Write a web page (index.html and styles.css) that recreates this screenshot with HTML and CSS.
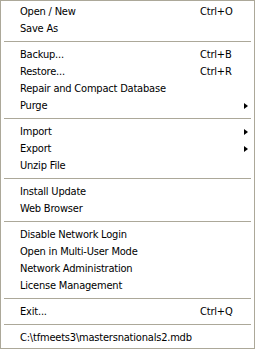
FILE: index.html
```html
<!DOCTYPE html>
<html>
<head>
<meta charset="utf-8">
<link rel="stylesheet" href="styles.css">
</head>
<body>
<div class="menu">
  <div class="item"><span class="label">Open / New</span><span class="key">Ctrl+O</span><span class="sub"></span></div>
  <div class="item"><span class="label">Save As</span><span class="key"></span><span class="sub"></span></div>
  <div class="sep"></div>
  <div class="item"><span class="label">Backup...</span><span class="key">Ctrl+B</span><span class="sub"></span></div>
  <div class="item"><span class="label">Restore...</span><span class="key">Ctrl+R</span><span class="sub"></span></div>
  <div class="item"><span class="label">Repair and Compact Database</span><span class="key"></span><span class="sub"></span></div>
  <div class="item"><span class="label">Purge</span><span class="key"></span><span class="sub"><span class="arrow"></span></span></div>
  <div class="sep"></div>
  <div class="item"><span class="label">Import</span><span class="key"></span><span class="sub"><span class="arrow"></span></span></div>
  <div class="item"><span class="label">Export</span><span class="key"></span><span class="sub"><span class="arrow"></span></span></div>
  <div class="item"><span class="label">Unzip File</span><span class="key"></span><span class="sub"></span></div>
  <div class="sep"></div>
  <div class="item"><span class="label">Install Update</span><span class="key"></span><span class="sub"></span></div>
  <div class="item"><span class="label">Web Browser</span><span class="key"></span><span class="sub"></span></div>
  <div class="sep"></div>
  <div class="item"><span class="label">Disable Network Login</span><span class="key"></span><span class="sub"></span></div>
  <div class="item"><span class="label">Open in Multi-User Mode</span><span class="key"></span><span class="sub"></span></div>
  <div class="item"><span class="label">Network Administration</span><span class="key"></span><span class="sub"></span></div>
  <div class="item"><span class="label">License Management</span><span class="key"></span><span class="sub"></span></div>
  <div class="sep"></div>
  <div class="item"><span class="label">Exit...</span><span class="key">Ctrl+Q</span><span class="sub"></span></div>
  <div class="sep"></div>
  <div class="item"><span class="label">C:\tfmeets3\mastersnationals2.mdb</span><span class="key"></span><span class="sub"></span></div>
</div>
</body>
</html>
```
FILE: styles.css
```css
html, body {
  margin: 0;
  padding: 0;
  background: #ffffff;
}
.menu {
  box-sizing: border-box;
  width: 255px;
  border: 1px solid #aca899;
  padding: 2px;
  background: #ffffff;
  display: flex;
  flex-direction: column;
  font-family: "DejaVu Sans Condensed", "Liberation Sans", Arial, sans-serif;
  font-size: 11px;
  letter-spacing: -0.2px;
  color: #000000;
}
.item {
  height: 17px;
  line-height: 16px;
  display: flex;
  align-items: center;
  padding-left: 17px;
  white-space: nowrap;
}
.label {
  flex: 1;
}
.key {
  width: 44px;
}
.sub {
  width: 8px;
  display: flex;
  align-items: center;
}
.arrow {
  width: 0;
  height: 0;
  border-top: 3.5px solid transparent;
  border-bottom: 3.5px solid transparent;
  border-left: 4px solid #000000;
}
.sep {
  height: 1px;
  margin: 4px 1px;
  background: #aca899;
}
```
